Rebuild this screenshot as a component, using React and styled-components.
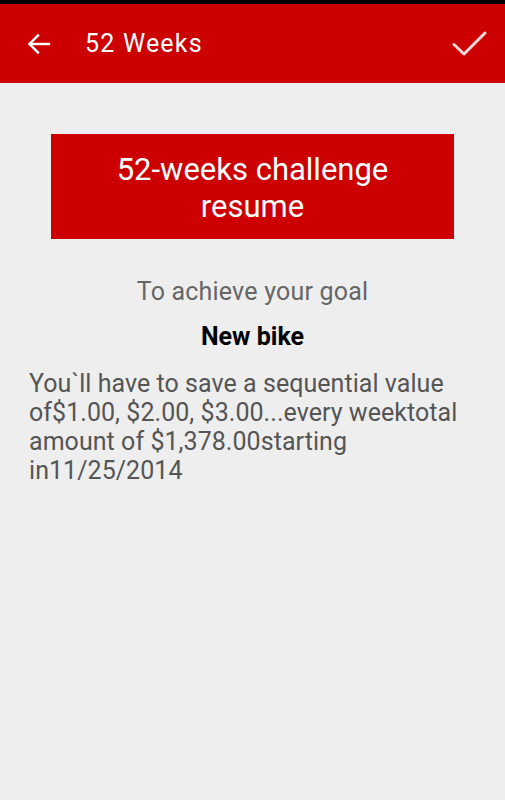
import React from "react";
import styled, { createGlobalStyle } from "styled-components";

const Global = createGlobalStyle`
  html, body { margin: 0; padding: 0; background: #eeeeee; }
  body { font-family: Roboto, "Noto Sans", sans-serif; }
`;

const Screen = styled.div`
  width: 505px;
  height: 800px;
  display: flex;
  flex-direction: column;
  background: #eeeeee;
`;

const StatusBar = styled.div`
  height: 4px;
  background: #000;
`;

const AppBar = styled.header`
  height: 79px;
  background: #cc0000;
  display: flex;
  align-items: center;
  padding: 0 17px 0 27px;
  color: #fff;
`;

const IconButton = styled.span`
  display: flex;
  align-items: center;
  justify-content: center;
`;

const Title = styled.h1`
  margin: 0 0 0 34px;
  flex: 1;
  font-size: 25px;
  font-weight: 400;
  letter-spacing: 1.2px;
  color: #fff;
`;

const Content = styled.main`
  display: flex;
  flex-direction: column;
  align-items: center;
  padding: 51px 0 0;
`;

const Banner = styled.div`
  box-sizing: border-box;
  width: 403px;
  height: 105px;
  padding-top: 3px;
  background: #cc0000;
  color: #fff;
  display: flex;
  align-items: center;
  justify-content: center;
  text-align: center;
  font-size: 31px;
  line-height: 37px;
`;

const Subtitle = styled.p`
  margin: 38px 0 0;
  font-size: 25px;
  line-height: 30px;
  letter-spacing: 0.2px;
  color: #666;
  text-align: center;
`;

const Goal = styled.p`
  margin: 15px 0 0;
  font-size: 25px;
  line-height: 30px;
  font-weight: 700;
  color: #000;
  text-align: center;
`;

const Description = styled.p`
  align-self: stretch;
  margin: 17px 0 0;
  padding: 0 29px;
  font-size: 25px;
  line-height: 29px;
  letter-spacing: 0.05px;
  color: #555;
`;

export default function App() {
  return (
    <Screen>
      <Global />
      <StatusBar />
      <AppBar>
        <IconButton>
          <svg width="24" height="24" viewBox="0 0 24 24" fill="none" stroke="#fff" strokeWidth="2.4" strokeLinecap="square">
            <path d="M22 12H3" />
            <path d="M11 3.5L2.5 12L11 20.5" />
          </svg>
        </IconButton>
        <Title>52 Weeks</Title>
        <IconButton>
          <svg width="36" height="26" viewBox="0 0 36 26" fill="none" stroke="rgba(255,225,225,0.95)" strokeWidth="3" strokeLinecap="round" strokeLinejoin="round">
            <path d="M2 13.5L12 23L33 2" />
          </svg>
        </IconButton>
      </AppBar>
      <Content>
        <Banner>
          52-weeks challenge
          <br />
          resume
        </Banner>
        <Subtitle>To achieve your goal</Subtitle>
        <Goal>New bike</Goal>
        <Description>
          You`ll have to save a sequential value of$1.00, $2.00, $3.00...every weektotal amount of $1,378.00starting in11/25/2014
        </Description>
      </Content>
    </Screen>
  );
}
